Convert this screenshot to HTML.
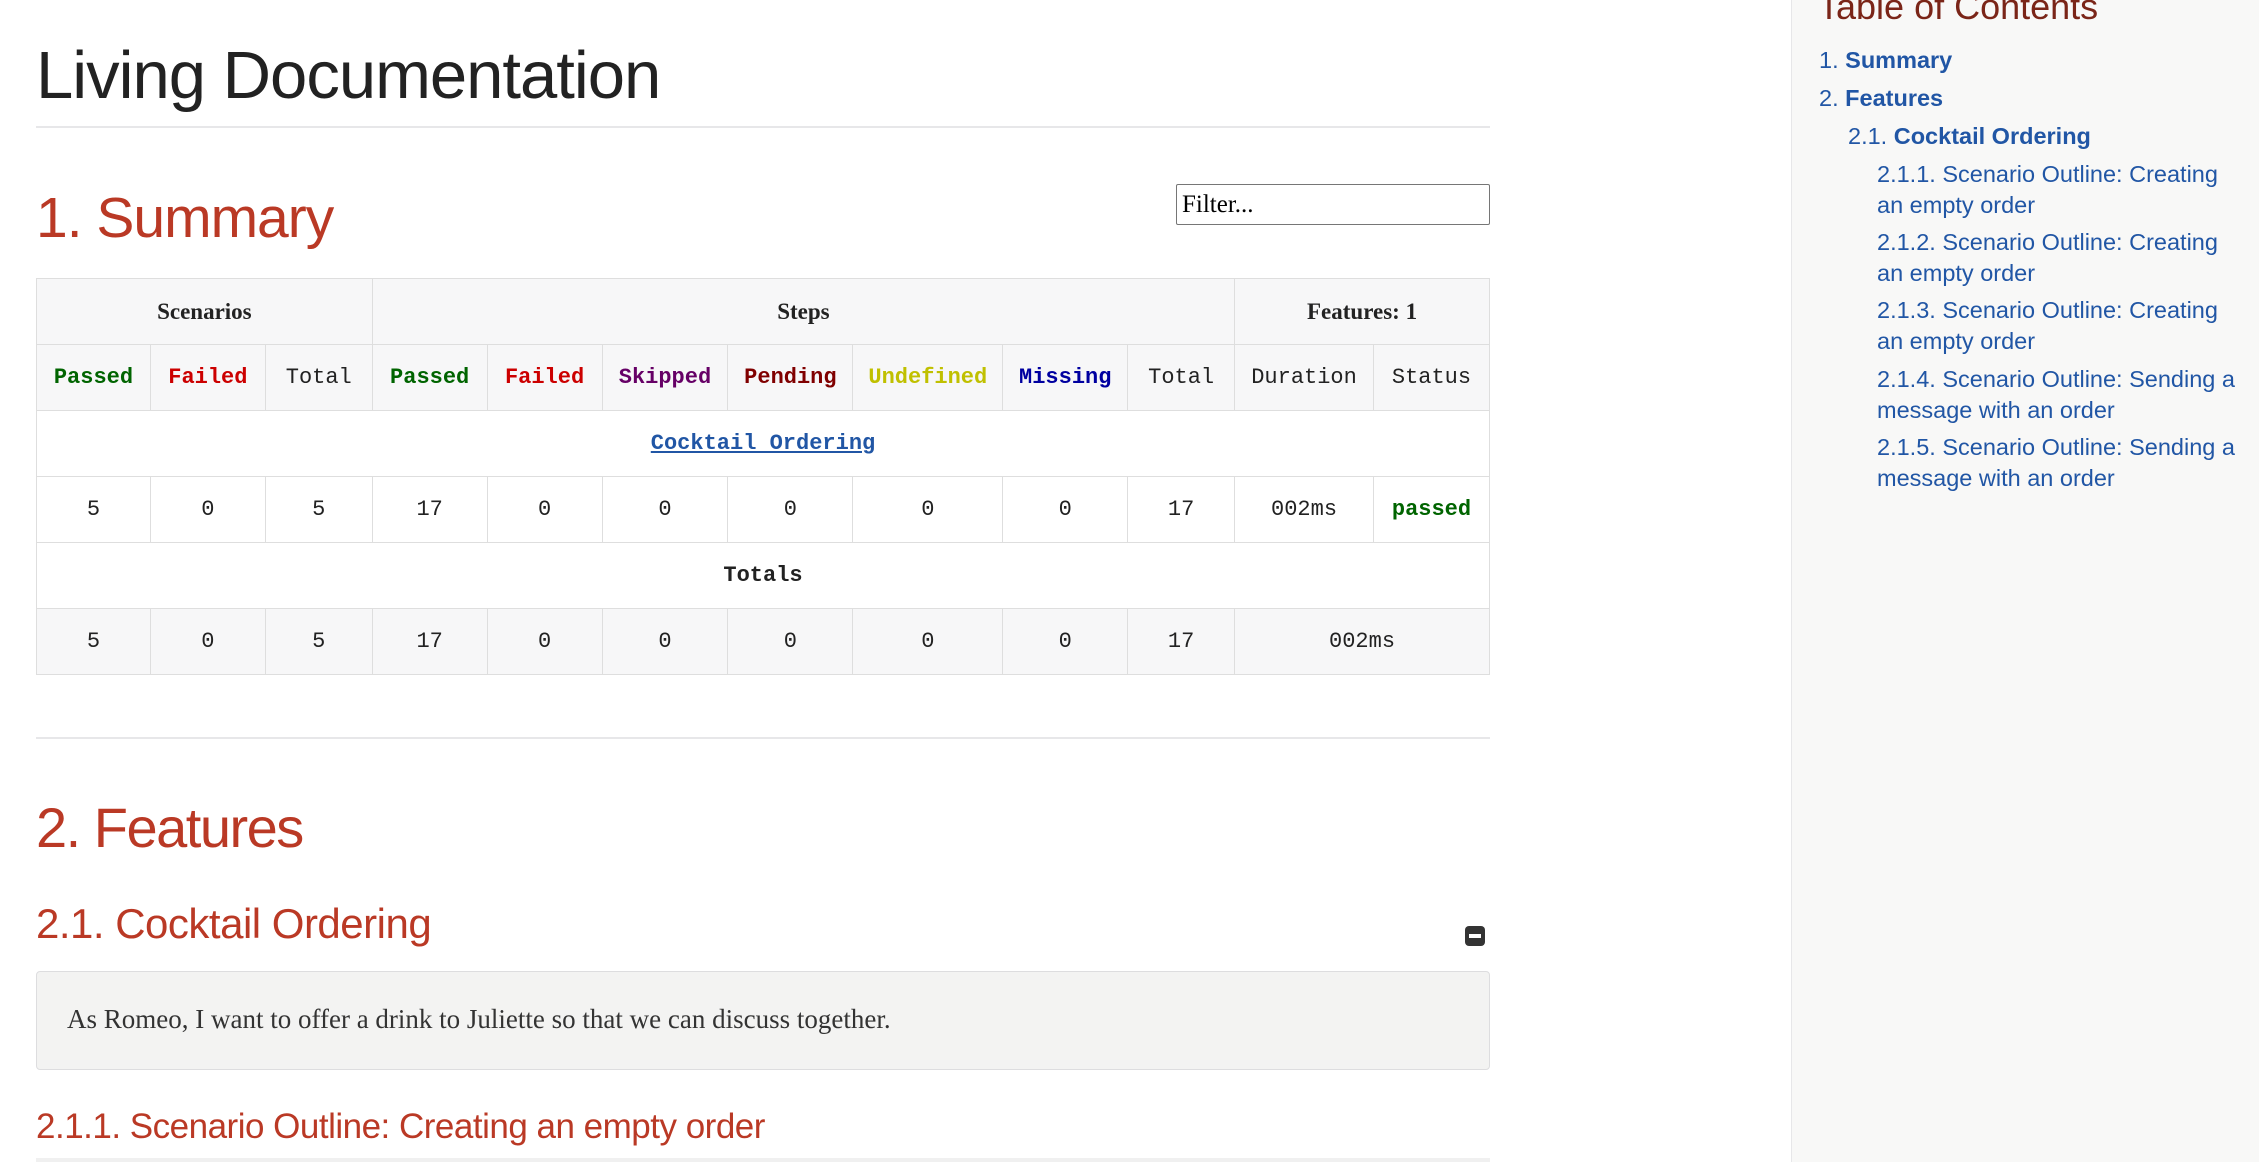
<!DOCTYPE html>
<html><head><meta charset="utf-8"><style>
body{margin:0;width:2259px;height:1162px;overflow:hidden;background:#fff;position:relative;font-family:"Liberation Sans",sans-serif}
.a{position:absolute;white-space:nowrap}
.red{color:#ba3925}
table{position:absolute;left:36px;top:278px;width:1454px;border-collapse:collapse;font-family:"Liberation Mono",monospace;font-size:22px}
td,th{border:1px solid #dedede;text-align:center;height:65px;padding:0;color:#222}
th{font-family:"Liberation Serif",serif;font-size:23px;font-weight:bold;background:#f7f7f8}
.g{background:#f7f7f8}
b{font-weight:bold}
.side{position:absolute;left:1791px;top:0;width:468px;height:1162px;background:#f8f8f7;border-left:1px solid #e7e7e9}
.toc a{position:absolute;color:#2156a5;text-decoration:none;font-size:23.5px;line-height:31px;white-space:normal}
</style></head><body>
<div class="a" style="left:36px;top:37px;font-size:67px;color:#222;letter-spacing:-1px">Living Documentation</div>
<div style="position:absolute;left:36px;top:126px;width:1454px;height:2px;background:#e7e7e9"></div>
<div class="a red" style="left:36px;top:185px;font-size:57px;letter-spacing:-1px">1. Summary</div>
<div style="position:absolute;left:1176px;top:184px;border:1px solid #767676;border-radius:2px;font-family:'Liberation Serif',serif;font-size:25px;line-height:39px;padding-left:5px;box-sizing:border-box;width:314px;height:41px">Filter...</div>
<table>
<colgroup><col style="width:114px"><col style="width:115px"><col style="width:107px"><col style="width:115px"><col style="width:115px"><col style="width:126px"><col style="width:125px"><col style="width:150px"><col style="width:125px"><col style="width:107px"><col style="width:139px"><col style="width:116px"></colgroup>
<tr><th colspan="3">Scenarios</th><th colspan="7">Steps</th><th colspan="2">Features: 1</th></tr>
<tr class="g"><td><b style="color:#006400">Passed</b></td><td><b style="color:#c00">Failed</b></td><td>Total</td><td><b style="color:#006400">Passed</b></td><td><b style="color:#c00">Failed</b></td><td><b style="color:#660066">Skipped</b></td><td><b style="color:#800000">Pending</b></td><td><b style="color:#c0c000">Undefined</b></td><td><b style="color:#0000a0">Missing</b></td><td>Total</td><td>Duration</td><td>Status</td></tr>
<tr><td colspan="12"><b style="color:#2156a5;text-decoration:underline">Cocktail Ordering</b></td></tr>
<tr><td>5</td><td>0</td><td>5</td><td>17</td><td>0</td><td>0</td><td>0</td><td>0</td><td>0</td><td>17</td><td>002ms</td><td><b style="color:#006400">passed</b></td></tr>
<tr><td colspan="12"><b>Totals</b></td></tr>
<tr class="g"><td>5</td><td>0</td><td>5</td><td>17</td><td>0</td><td>0</td><td>0</td><td>0</td><td>0</td><td>17</td><td colspan="2">002ms</td></tr>
</table>
<div style="position:absolute;left:36px;top:737px;width:1454px;height:2px;background:#e7e7e9"></div>
<div class="a red" style="left:36px;top:795px;font-size:56px;letter-spacing:-1.5px">2. Features</div>
<div class="a red" style="left:36px;top:900px;font-size:42px;letter-spacing:-0.5px">2.1. Cocktail Ordering</div>
<div style="position:absolute;left:1465px;top:926px;width:20px;height:20px;background:#333;border-radius:4px"><div style="position:absolute;left:4px;top:8px;width:12px;height:4px;background:#fff"></div></div>
<div style="position:absolute;left:36px;top:971px;width:1452px;height:97px;background:#f3f3f2;border:1px solid #dddddf;border-radius:4px"></div>
<div class="a" style="left:67px;top:1004px;font-family:'Liberation Serif',serif;font-size:27px;color:#333">As Romeo, I want to offer a drink to Juliette so that we can discuss together.</div>
<div class="a red" style="left:36px;top:1107px;font-size:35px;letter-spacing:-0.5px">2.1.1. Scenario Outline: Creating an empty order</div>
<div style="position:absolute;left:36px;top:1158px;width:1454px;height:4px;background:#f0f0f0"></div>
<div class="side toc">
<div class="a" style="left:26px;top:-14px;font-size:36px;color:#7a2518">Table of Contents</div>
<a style="left:27px;top:45px"><span>1.</span> <b>Summary</b></a>
<a style="left:27px;top:83px"><span>2.</span> <b>Features</b></a>
<a style="left:56px;top:121px"><span>2.1.</span> <b>Cocktail Ordering</b></a>
<a style="left:85px;top:159px;width:370px">2.1.1. Scenario Outline: Creating an empty order</a>
<a style="left:85px;top:227px;width:370px">2.1.2. Scenario Outline: Creating an empty order</a>
<a style="left:85px;top:295px;width:370px">2.1.3. Scenario Outline: Creating an empty order</a>
<a style="left:85px;top:364px;width:370px">2.1.4. Scenario Outline: Sending a message with an order</a>
<a style="left:85px;top:432px;width:370px">2.1.5. Scenario Outline: Sending a message with an order</a>
</div>
</body></html>
